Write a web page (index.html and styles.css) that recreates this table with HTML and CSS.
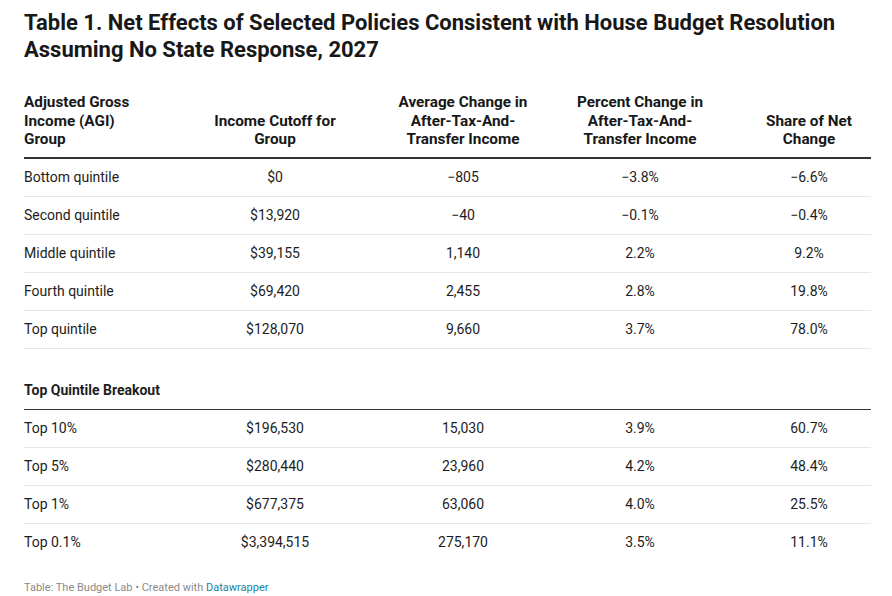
FILE: index.html
```html
<!DOCTYPE html>
<html>
<head>
<meta charset="utf-8">
<link rel="stylesheet" href="styles.css">
</head>
<body>
<div class="chart">
  <h1 class="title">Table 1. Net Effects of Selected Policies Consistent with House Budget Resolution Assuming No State Response, 2027</h1>
  <table class="tbl">
    <colgroup>
      <col class="c1"><col class="c2"><col class="c3"><col class="c4"><col class="c5">
    </colgroup>
    <thead>
      <tr>
        <th class="left h1">Adjusted Gross Income (AGI) Group</th>
        <th class="h2">Income Cutoff for Group</th>
        <th>Average Change in After-Tax-And-Transfer Income</th>
        <th class="h4">Percent Change in After-Tax-And-Transfer Income</th>
        <th>Share of Net Change</th>
      </tr>
    </thead>
    <tbody>
      <tr><td class="left">Bottom quintile</td><td>$0</td><td>−805</td><td>−3.8%</td><td>−6.6%</td></tr>
      <tr><td class="left">Second quintile</td><td>$13,920</td><td>−40</td><td>−0.1%</td><td>−0.4%</td></tr>
      <tr><td class="left">Middle quintile</td><td>$39,155</td><td>1,140</td><td>2.2%</td><td>9.2%</td></tr>
      <tr><td class="left">Fourth quintile</td><td>$69,420</td><td>2,455</td><td>2.8%</td><td>19.8%</td></tr>
      <tr><td class="left">Top quintile</td><td>$128,070</td><td>9,660</td><td>3.7%</td><td>78.0%</td></tr>
      <tr class="section"><td class="left" colspan="5">Top Quintile Breakout</td></tr>
      <tr><td class="left">Top 10%</td><td>$196,530</td><td>15,030</td><td>3.9%</td><td>60.7%</td></tr>
      <tr><td class="left">Top 5%</td><td>$280,440</td><td>23,960</td><td>4.2%</td><td>48.4%</td></tr>
      <tr><td class="left">Top 1%</td><td>$677,375</td><td>63,060</td><td>4.0%</td><td>25.5%</td></tr>
      <tr class="last"><td class="left">Top 0.1%</td><td>$3,394,515</td><td>275,170</td><td>3.5%</td><td>11.1%</td></tr>
    </tbody>
  </table>
  <div class="footer">Table: The Budget Lab • Created with <a class="dw" href="#">Datawrapper</a></div>
</div>
</body>
</html>
```
FILE: styles.css
```css
html, body {
  margin: 0;
  padding: 0;
  background: #ffffff;
}
body {
  font-family: Roboto, "Liberation Sans", sans-serif;
  color: #181818;
}
.chart {
  width: 847px;
  padding: 9px 0 0 24px;
}
.title {
  margin: 0;
  font-size: 22px;
  font-weight: 700;
  line-height: 27px;
  color: #181818;
}
.tbl {
  margin-top: 30px;
  width: 847px;
  border-collapse: collapse;
  table-layout: fixed;
  font-size: 14px;
}
.c1 { width: 133px; }
.c2 { width: 236px; }
.c3 { width: 140px; }
.c4 { width: 214px; }
.c5 { width: 124px; }
.tbl th {
  font-size: 15.3px;
  font-weight: 700;
  line-height: 18.5px;
  text-align: center;
  vertical-align: bottom;
  padding: 0 0 8px 0;
  border-bottom: 2px solid #333333;
  color: #181818;
}
.tbl th.h1 {
  padding-right: 10px;
}
.tbl th.h2 {
  padding-left: 48px;
  padding-right: 48px;
}
.tbl th.h4 {
  padding-left: 37px;
  padding-right: 37px;
}
.tbl td {
  height: 37px;
  padding: 0;
  text-align: center;
  vertical-align: middle;
  border-bottom: 1px solid #e6e6e6;
  color: #1d1d1d;
  line-height: 18px;
}
.tbl .left {
  text-align: left;
}
.tbl tr.section td {
  height: 40px;
  padding-top: 10px;
  padding-bottom: 10px;
  vertical-align: bottom;
  font-weight: 700;
  border-bottom: 1px solid #333333;
}
.tbl tr.last td {
  border-bottom: none;
}
.footer {
  margin-top: 20px;
  font-size: 11px;
  line-height: 14px;
  color: #8a8a8a;
}
.dw {
  color: #1d81a2;
  text-decoration: none;
}
```
